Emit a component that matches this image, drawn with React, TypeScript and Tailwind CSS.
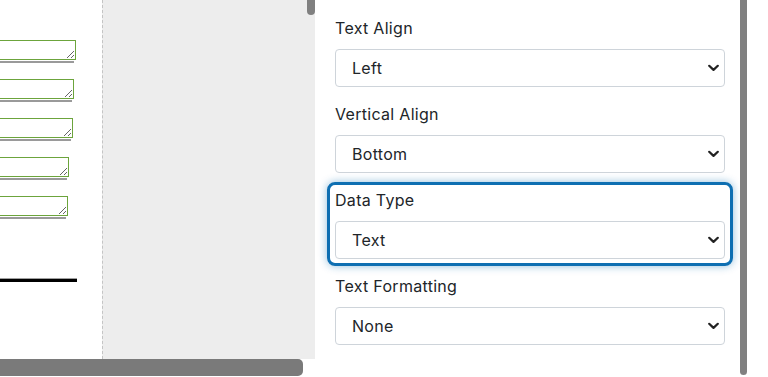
import React from "react";

const fields = [
  { right: 76 },
  { right: 74 },
  { right: 73 },
  { right: 69 },
  { right: 68 },
];

function Chevron() {
  return (
    <svg width="11" height="7" viewBox="0 0 11 7" className="pointer-events-none absolute right-[5px] top-1/2 -translate-y-1/2">
      <path d="M1.2 1.2 5.5 5.4 9.8 1.2" fill="none" stroke="#222" strokeWidth="2.2" strokeLinecap="round" strokeLinejoin="round" />
    </svg>
  );
}

function Select({ value }: { value: string }) {
  return (
    <div className="relative mt-[8px] h-[38px] w-[390px] rounded-[4px] border border-[#ced4da] bg-white">
      <div className="flex h-full items-center pl-[16px] text-[16px] tracking-[0.3px] text-[#212529]">{value}</div>
      <Chevron />
    </div>
  );
}

function Label({ text }: { text: string }) {
  return <div className="h-[24px] text-[16px] leading-[23px] tracking-[0.3px] text-[#212529]">{text}</div>;
}

export default function App() {
  return (
    <div className="flex h-[377px] w-[768px] overflow-hidden bg-white" style={{ fontFamily: "Inter, sans-serif" }}>
      <div className="flex w-[315px] flex-col">
        <div className="relative flex h-[359px]">
          <div className="w-[102px] overflow-hidden bg-white pt-[40px]">
            {fields.map((f, i) => (
              <div key={i} className="mb-[16px]">
                <textarea
                  readOnly
                  className="block h-[20px] resize border border-[#6ca43c] bg-white outline-none"
                  style={{ width: f.right + 30, marginLeft: -30 }}
                />
                <div className="mt-[1px] h-[2px] bg-[#9a9a9a]" style={{ width: f.right - 2 }} />
              </div>
            ))}
            <div className="mt-[59px] w-[77px] border-t border-[#a0a0a0]" />
            <div className="h-[3px] w-[77px] bg-black" />
          </div>
          <div className="flex-1 border-l border-dashed border-[#c4c4c4] bg-[#ededed]" />
          <div className="absolute right-0 top-0 h-[15px] w-[8px] rounded-b-[4px] bg-[#808080]" />
        </div>
        <div className="h-[18px] bg-white">
          <div className="h-[17px] w-[303px] rounded-r-[5px] bg-[#7a7a7a]" />
        </div>
      </div>
      <div className="w-[425px] bg-white pl-[20px] pr-[15px] pt-[17px]">
        <Label text="Text Align" />
        <Select value="Left" />
        <div className="mt-[16px]">
          <Label text="Vertical Align" />
          <Select value="Bottom" />
        </div>
        <div className="-mx-[8px] mt-[9px] rounded-[8px] border-[3px] border-[#0e6fb2] px-[5px] pb-[4px] pt-[4px] shadow-[0_0_8px_rgba(14,111,178,0.45)]">
          <Label text="Data Type" />
          <Select value="Text" />
        </div>
        <div className="mt-[9px]">
          <Label text="Text Formatting" />
          <Select value="None" />
        </div>
      </div>
      <div className="h-[375px] w-[7px] rounded-b-[4px] bg-[#808080]" />
      <div className="flex-1 bg-white" />
    </div>
  );
}
